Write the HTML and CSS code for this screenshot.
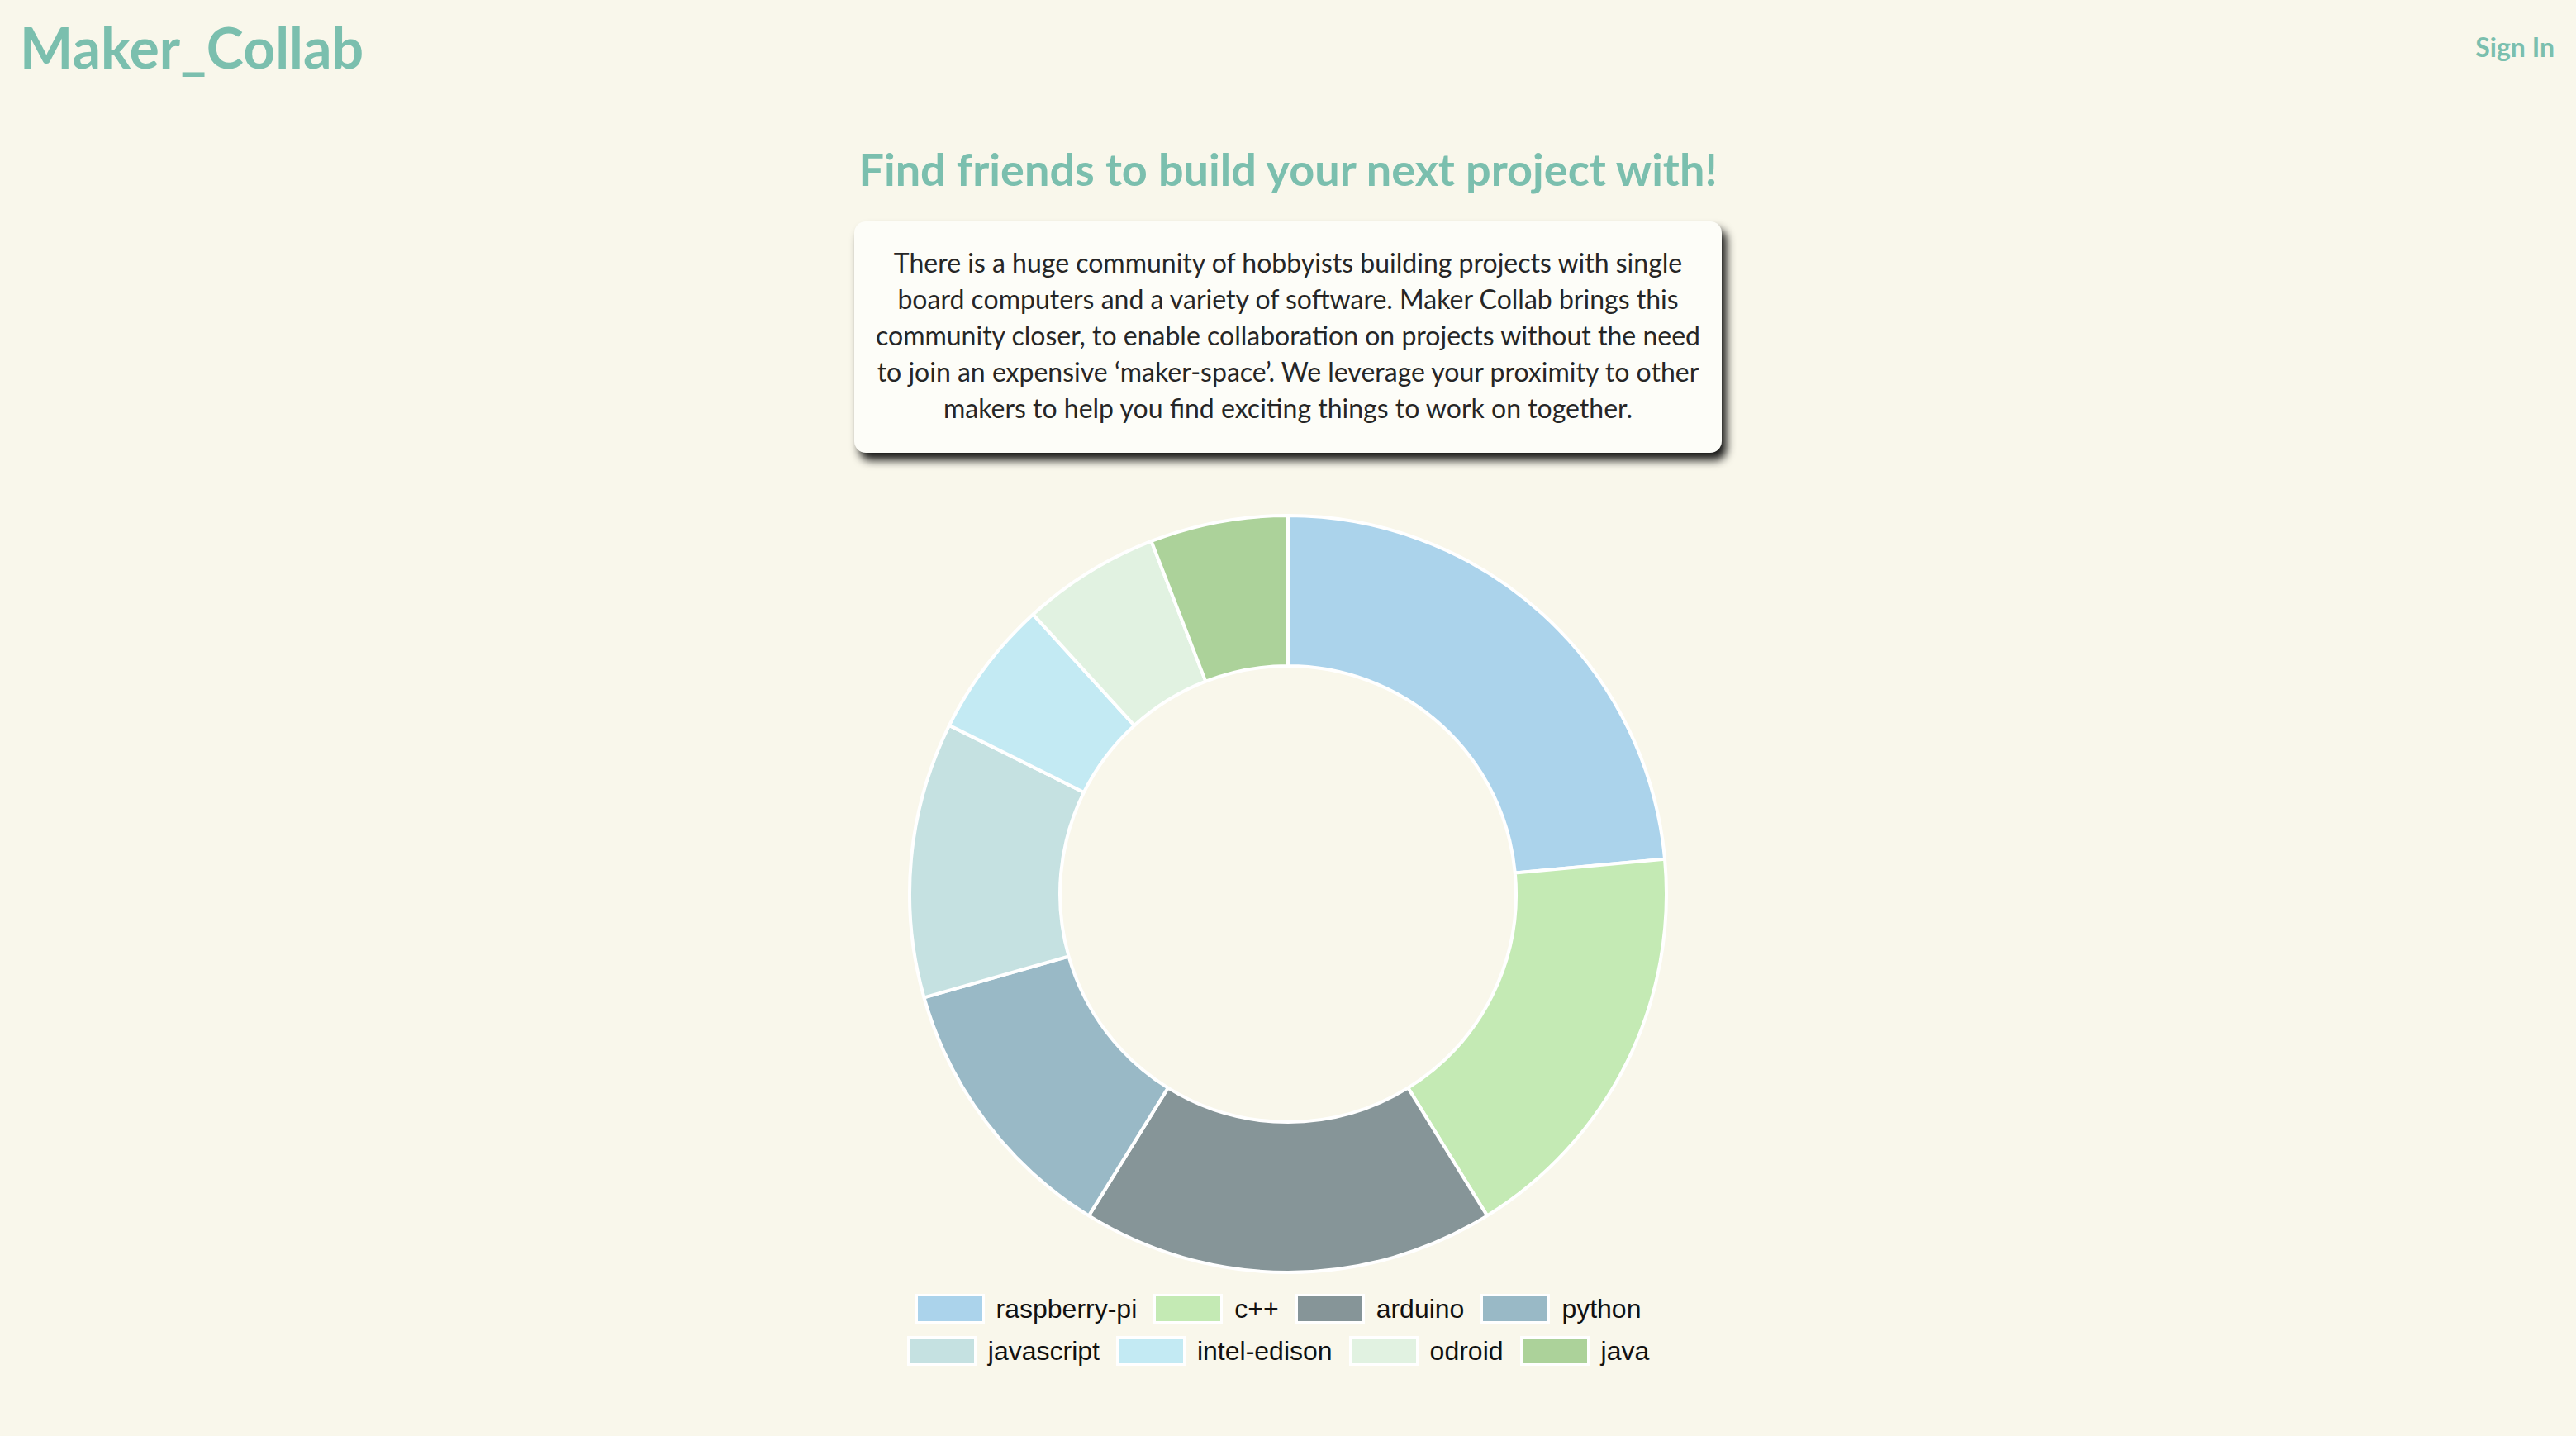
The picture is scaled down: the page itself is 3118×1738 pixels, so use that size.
FILE: index.html
```html
<!DOCTYPE html>
<html lang="en">
<head>
<meta charset="utf-8">
<title>Maker_Collab</title>
<link rel="stylesheet" href="styles.css">
</head>
<body>
<header class="topbar">
  <a class="brand" href="#">Maker_Collab</a>
  <a class="signin" href="#">Sign In</a>
</header>
<main class="content">
  <h2 class="tagline">Find friends to build your next project with!</h2>
  <div class="card">
    <p class="intro">There is a huge community of hobbyists building projects with single board computers and a variety of software. Maker Collab brings this community closer, to enable collaboration on projects without the need to join an expensive ‘maker-space’. We leverage your proximity to other makers to help you find exciting things to work on together.</p>
  </div>
  <svg class="donut" width="924" height="924" viewBox="-462 -462 924 924">
    <g stroke="#ffffff" stroke-width="4" stroke-linejoin="bevel">
      <path fill="#abd3eb" d="M0,-458 A458,458 0 0 1 456.05,-42.26 L274.82,-25.47 A276,276 0 0 0 0,-276 Z"/>
      <path fill="#c4eab4" d="M456.05,-42.26 A458,458 0 0 1 241.10,389.40 L145.29,234.66 A276,276 0 0 0 274.82,-25.47 Z"/>
      <path fill="#869598" d="M241.10,389.40 A458,458 0 0 1 -241.10,389.40 L-145.29,234.66 A276,276 0 0 0 145.29,234.66 Z"/>
      <path fill="#99b9c6" d="M-241.10,389.40 A458,458 0 0 1 -440.52,125.34 L-265.47,75.53 A276,276 0 0 0 -145.29,234.66 Z"/>
      <path fill="#c5e1e1" d="M-440.52,125.34 A458,458 0 0 1 -409.98,-204.15 L-247.06,-123.03 A276,276 0 0 0 -265.47,75.53 Z"/>
      <path fill="#c3eaf3" d="M-409.98,-204.15 A458,458 0 0 1 -308.55,-338.46 L-185.94,-203.96 A276,276 0 0 0 -247.06,-123.03 Z"/>
      <path fill="#e1f2e1" d="M-308.55,-338.46 A458,458 0 0 1 -165.45,-427.07 L-99.70,-257.36 A276,276 0 0 0 -185.94,-203.96 Z"/>
      <path fill="#acd29a" d="M-165.45,-427.07 A458,458 0 0 1 0,-458 L0,-276 A276,276 0 0 0 -99.70,-257.36 Z"/>
    </g>
  </svg>
  <div class="legend">
    <div class="legend-row">
      <span class="item"><i class="swatch sw-rpi"></i>raspberry-pi</span>
      <span class="item"><i class="swatch sw-cpp"></i>c++</span>
      <span class="item"><i class="swatch sw-ard"></i>arduino</span>
      <span class="item"><i class="swatch sw-py"></i>python</span>
    </div>
    <div class="legend-row">
      <span class="item"><i class="swatch sw-js"></i>javascript</span>
      <span class="item"><i class="swatch sw-edi"></i>intel-edison</span>
      <span class="item"><i class="swatch sw-odr"></i>odroid</span>
      <span class="item"><i class="swatch sw-java"></i>java</span>
    </div>
  </div>
</main>
</body>
</html>
```
FILE: styles.css
```css
html, body {
  margin: 0;
  padding: 0;
}
body {
  background: #f9f7eb;
  font-family: Lato, "Open Sans", sans-serif;
  color: #222;
}
.topbar {
  height: 112px;
  display: flex;
  align-items: center;
  justify-content: space-between;
  padding: 0 26px 0 24px;
}
.brand {
  color: #7bbfae;
  font-weight: 700;
  font-size: 68px;
  text-decoration: none;
}
.signin {
  color: #7bbfae;
  font-weight: 700;
  font-size: 32px;
  text-decoration: none;
}
.content {
  display: flex;
  flex-direction: column;
  align-items: center;
}
.tagline {
  margin: 66px 0 0;
  color: #7bbfae;
  font-size: 54px;
  font-weight: 700;
  line-height: 54px;
}
.card {
  margin-top: 36px;
  width: 1050px;
  box-sizing: border-box;
  padding: 28px 18px 32px;
  background: #fdfdf8;
  border-radius: 14px;
  box-shadow: 6px 9px 11px rgba(0, 0, 0, 0.9);
}
.intro {
  margin: 0;
  text-align: center;
  font-size: 32px;
  line-height: 44px;
  color: #262626;
}
.donut {
  display: block;
  margin-top: 72px;
}
.legend {
  margin-top: 22px;
  display: flex;
  flex-direction: column;
  align-items: center;
  gap: 15px;
  margin-right: 24px;
}
.legend-row {
  display: flex;
  align-items: center;
  gap: 20px;
}
.item {
  display: flex;
  align-items: center;
  gap: 14px;
  font-family: "Liberation Sans", Arial, sans-serif;
  font-size: 32px;
  line-height: 36px;
  color: #111;
}
.swatch {
  display: block;
  width: 78px;
  height: 30px;
  border: 3px solid #ffffff;
}
.sw-rpi { background: #abd3eb; }
.sw-cpp { background: #c4eab4; }
.sw-ard { background: #869598; }
.sw-py { background: #99b9c6; }
.sw-js { background: #c5e1e1; }
.sw-edi { background: #c3eaf3; }
.sw-odr { background: #e1f2e1; }
.sw-java { background: #acd29a; }
```
